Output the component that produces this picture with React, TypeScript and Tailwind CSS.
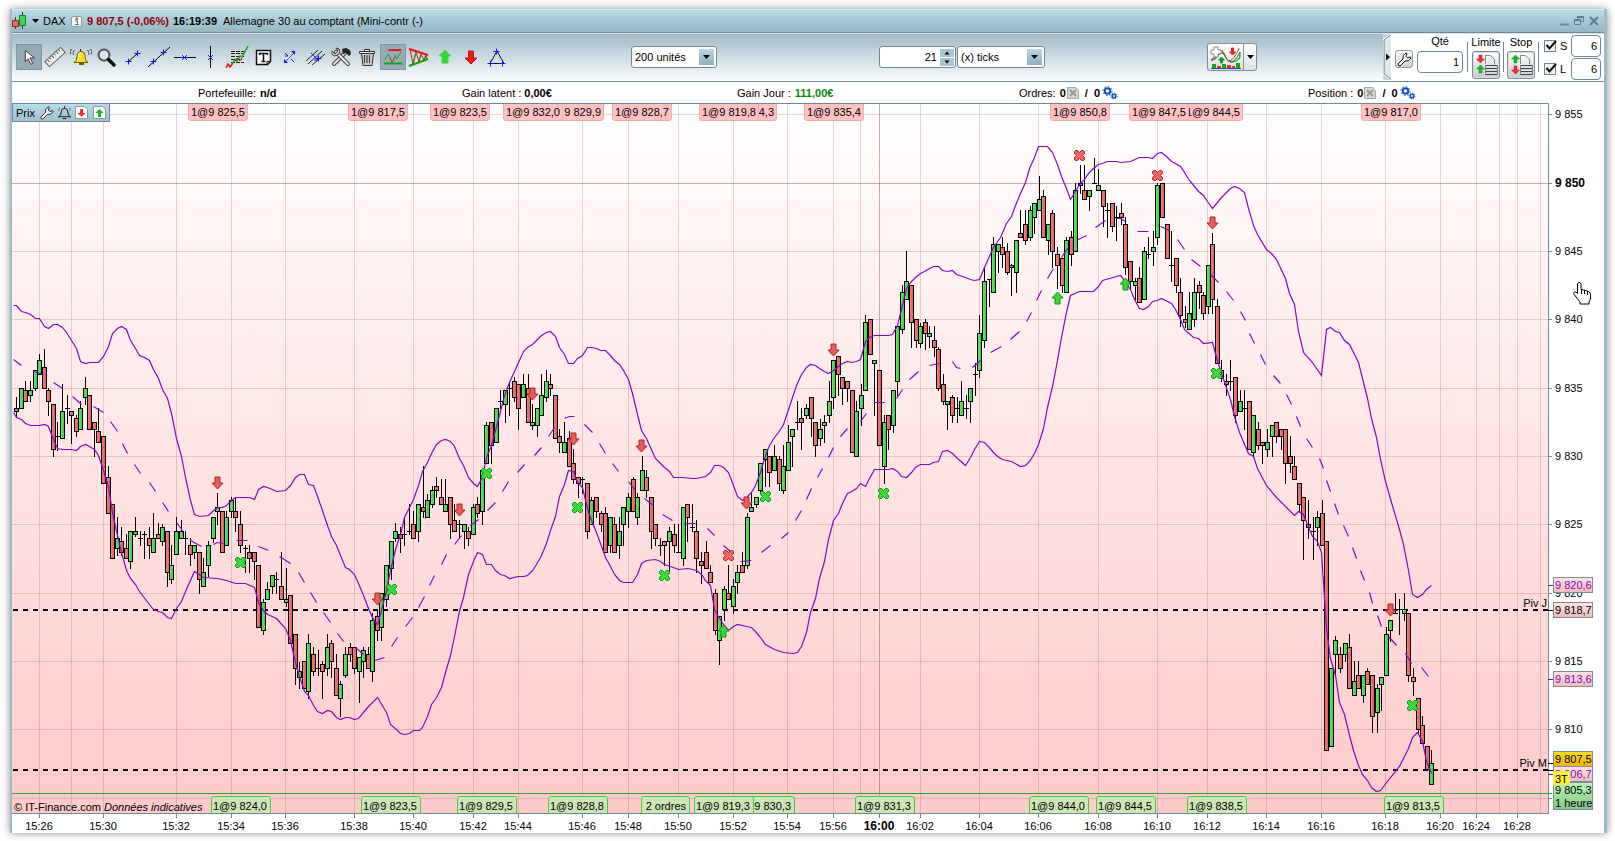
import { useState } from "react";
import type { ReactNode } from "react";

// high, body top, body bottom, low, rising (1) or falling (0), in chart units
const candles = [
  [397, 408, 411, 416, 0], [388, 388, 408, 408, 1], [381, 390, 401, 401, 0], [381, 390, 395, 401, 1], [370, 370, 388, 390, 1],
  [354, 360, 374, 374, 1], [349, 367, 388, 388, 0], [388, 390, 401, 415, 0], [404, 404, 449, 456, 0], [422, 436, 436, 450, 0],
  [384, 411, 438, 438, 1], [395, 408, 408, 423, 0], [411, 411, 415, 443, 0], [415, 418, 431, 436, 0], [401, 408, 429, 429, 1],
  [377, 388, 397, 404, 1], [395, 395, 429, 429, 0], [422, 422, 429, 456, 0], [408, 431, 442, 442, 0], [436, 436, 483, 483, 0],
  [466, 477, 513, 513, 0], [504, 504, 558, 558, 0], [517, 538, 548, 555, 1], [527, 541, 552, 555, 0], [534, 548, 558, 558, 0],
  [531, 531, 561, 568, 1], [517, 531, 534, 536, 1], [531, 538, 538, 545, 0], [531, 534, 534, 558, 0], [527, 538, 545, 558, 0],
  [513, 538, 552, 552, 1], [523, 534, 538, 538, 0], [524, 527, 541, 545, 1], [531, 531, 572, 586, 0], [545, 565, 579, 583, 1],
  [517, 531, 554, 554, 1], [520, 531, 538, 538, 1], [531, 538, 538, 554, 0], [538, 545, 554, 565, 0], [545, 545, 552, 558, 1],
  [552, 552, 579, 593, 0], [558, 572, 586, 586, 1], [541, 545, 565, 576, 1], [517, 517, 538, 542, 1], [493, 507, 511, 524, 1],
  [511, 511, 552, 552, 0], [511, 517, 545, 545, 1], [497, 500, 511, 517, 1], [497, 511, 517, 531, 0], [511, 524, 545, 552, 0],
  [545, 548, 548, 572, 0], [545, 552, 558, 572, 0], [552, 552, 561, 579, 0], [565, 565, 627, 627, 0], [599, 602, 630, 634, 1],
  [582, 589, 599, 599, 1], [575, 575, 586, 593, 1], [572, 579, 579, 593, 0], [552, 586, 599, 599, 0], [568, 599, 602, 606, 1],
  [595, 595, 643, 643, 0], [634, 634, 668, 684, 0], [662, 671, 677, 688, 1], [661, 661, 688, 688, 0], [634, 643, 691, 698, 1],
  [647, 654, 671, 675, 0], [650, 668, 668, 675, 0], [661, 664, 671, 698, 0], [634, 647, 668, 675, 1], [640, 643, 661, 677, 0],
  [654, 668, 695, 695, 0], [681, 684, 698, 716, 1], [647, 654, 675, 677, 1], [643, 647, 654, 661, 0], [647, 647, 668, 673, 0],
  [657, 657, 671, 702, 1], [647, 650, 661, 677, 1], [647, 654, 668, 668, 0], [613, 620, 671, 681, 1], [609, 616, 630, 640, 0],
  [593, 593, 627, 640, 1], [565, 565, 599, 606, 1], [541, 541, 568, 579, 1], [523, 531, 538, 541, 1], [527, 534, 538, 552, 0],
  [517, 534, 534, 545, 0], [504, 531, 531, 534, 0], [511, 524, 538, 538, 0], [504, 504, 531, 541, 1], [466, 507, 511, 517, 0],
  [494, 500, 517, 517, 1], [486, 490, 504, 507, 1], [477, 486, 490, 497, 0], [479, 497, 504, 504, 0], [479, 504, 511, 511, 1],
  [497, 497, 524, 538, 0], [504, 520, 531, 531, 0], [520, 524, 524, 538, 0], [524, 524, 531, 548, 1], [527, 531, 538, 545, 0],
  [504, 507, 534, 534, 1], [497, 504, 513, 517, 0], [470, 470, 511, 524, 1], [422, 425, 463, 463, 1], [422, 422, 445, 463, 0],
  [408, 408, 442, 442, 1], [390, 401, 401, 408, 0], [390, 390, 404, 422, 1], [382, 388, 388, 415, 0], [377, 381, 397, 401, 0],
  [384, 384, 408, 429, 0], [374, 384, 397, 397, 1], [374, 388, 422, 422, 0], [404, 422, 425, 429, 1], [408, 408, 425, 436, 1],
  [374, 395, 415, 415, 1], [370, 381, 397, 401, 1], [374, 384, 388, 395, 0], [395, 395, 438, 438, 0], [429, 436, 442, 452, 0],
  [422, 442, 452, 452, 1], [431, 438, 466, 466, 0], [449, 463, 479, 483, 0], [477, 477, 483, 497, 0], [477, 479, 479, 493, 0],
  [483, 483, 531, 538, 0], [497, 500, 524, 524, 1], [497, 497, 511, 517, 0], [511, 513, 524, 531, 0], [507, 513, 552, 552, 0],
  [517, 517, 545, 552, 1], [517, 524, 552, 552, 0], [517, 531, 545, 558, 1], [507, 507, 524, 545, 1], [493, 497, 511, 527, 1],
  [477, 479, 511, 511, 0], [493, 497, 517, 524, 1], [456, 470, 490, 490, 1], [470, 477, 490, 497, 0], [497, 497, 531, 548, 0],
  [524, 524, 538, 545, 0], [538, 545, 545, 555, 0], [541, 541, 545, 565, 0], [527, 531, 541, 571, 1], [524, 534, 545, 552, 0],
  [524, 552, 552, 552, 0], [507, 507, 558, 565, 1], [504, 504, 517, 541, 0], [504, 527, 527, 531, 0], [520, 531, 558, 572, 0],
  [552, 561, 565, 583, 0], [541, 552, 568, 568, 0], [565, 572, 582, 582, 0], [589, 593, 630, 634, 0], [616, 616, 640, 664, 1],
  [586, 589, 609, 620, 1], [565, 593, 599, 599, 0], [579, 586, 606, 613, 1], [565, 572, 582, 593, 1], [552, 565, 572, 572, 0],
  [513, 517, 565, 568, 1], [493, 507, 511, 511, 1], [497, 497, 504, 507, 1], [463, 463, 490, 493, 1], [449, 449, 459, 486, 1],
  [456, 456, 472, 486, 0], [445, 456, 470, 470, 1], [456, 459, 483, 490, 0], [445, 466, 490, 493, 1], [425, 442, 470, 470, 1],
  [429, 429, 436, 466, 1], [401, 422, 422, 429, 0], [408, 418, 422, 449, 0], [404, 408, 415, 418, 1], [397, 397, 418, 436, 0],
  [422, 422, 445, 456, 0], [419, 429, 438, 445, 1], [415, 422, 425, 442, 1], [381, 401, 415, 422, 1], [360, 360, 397, 408, 1],
  [356, 356, 374, 395, 0], [377, 377, 388, 404, 0], [381, 381, 388, 401, 0], [390, 390, 452, 452, 0], [401, 411, 456, 456, 1],
  [384, 395, 408, 425, 1], [315, 322, 390, 390, 1], [319, 319, 354, 354, 0], [360, 360, 363, 415, 1], [370, 370, 445, 445, 0],
  [415, 422, 466, 483, 1], [415, 415, 429, 449, 0], [390, 390, 425, 432, 1], [326, 326, 381, 395, 1], [285, 292, 329, 333, 1],
  [251, 281, 299, 299, 1], [285, 285, 322, 347, 0], [319, 319, 340, 347, 0], [323, 326, 343, 347, 1], [319, 322, 333, 349, 0],
  [326, 333, 336, 347, 1], [326, 340, 347, 356, 0], [347, 349, 388, 390, 0], [374, 384, 401, 404, 0], [401, 401, 404, 429, 1],
  [395, 397, 415, 422, 0], [397, 408, 408, 422, 0], [381, 401, 415, 415, 1], [395, 408, 408, 418, 0], [388, 388, 401, 422, 1],
  [363, 374, 374, 395, 0], [315, 333, 370, 377, 1], [267, 281, 340, 347, 1], [279, 279, 279, 306, 0], [237, 244, 292, 292, 1],
  [244, 244, 251, 272, 1], [237, 247, 254, 267, 0], [243, 251, 272, 274, 0], [264, 265, 267, 295, 1], [240, 240, 272, 292, 1],
  [210, 233, 237, 237, 0], [210, 224, 240, 244, 0], [206, 210, 237, 240, 1], [203, 203, 217, 233, 1], [176, 199, 210, 210, 1],
  [190, 196, 237, 237, 0], [224, 224, 240, 254, 1], [210, 213, 251, 267, 0], [247, 254, 265, 288, 0], [258, 258, 285, 292, 0],
  [237, 240, 292, 292, 1], [231, 237, 254, 265, 0], [183, 190, 251, 251, 1], [165, 183, 185, 193, 0], [165, 190, 199, 199, 0],
  [190, 190, 196, 210, 1], [158, 183, 183, 183, 0], [169, 185, 190, 190, 1], [190, 190, 206, 226, 0], [203, 210, 210, 237, 0],
  [203, 203, 226, 231, 0], [206, 217, 217, 240, 0], [203, 213, 217, 224, 0], [217, 224, 267, 274, 0], [261, 261, 281, 288, 0],
  [278, 281, 285, 299, 1], [267, 278, 302, 302, 0], [247, 251, 299, 299, 1], [237, 254, 254, 258, 0], [231, 247, 251, 265, 1],
  [183, 185, 237, 244, 1], [183, 183, 217, 217, 0], [224, 224, 258, 258, 0], [231, 265, 265, 281, 0], [258, 258, 285, 292, 0],
  [278, 292, 315, 326, 0], [306, 319, 322, 327, 0], [292, 313, 329, 329, 1], [278, 292, 319, 326, 1], [281, 285, 292, 308, 0],
  [292, 295, 313, 319, 0], [265, 265, 306, 313, 1], [233, 244, 299, 313, 0], [299, 306, 363, 363, 0], [360, 370, 378, 381, 0],
  [374, 381, 384, 395, 0], [360, 381, 381, 390, 0], [377, 377, 415, 422, 0], [390, 401, 411, 411, 1], [390, 408, 408, 429, 0],
  [401, 401, 449, 449, 0], [415, 415, 452, 456, 1], [422, 429, 445, 449, 0], [442, 442, 445, 463, 0], [429, 442, 449, 456, 1],
  [425, 425, 436, 456, 1], [422, 422, 436, 442, 0], [429, 429, 436, 449, 0], [429, 429, 463, 483, 0], [436, 456, 463, 472, 0],
  [456, 466, 479, 479, 0], [483, 483, 504, 511, 0], [497, 497, 520, 559, 0], [500, 524, 527, 538, 0], [517, 531, 531, 559, 0],
  [511, 517, 527, 545, 1], [500, 513, 545, 545, 0], [541, 541, 750, 750, 0], [668, 668, 746, 746, 1], [636, 640, 654, 675, 1],
  [647, 654, 668, 672, 0], [643, 643, 654, 661, 1], [634, 647, 688, 688, 0], [661, 681, 695, 695, 1], [661, 675, 688, 688, 0],
  [675, 675, 695, 702, 1], [668, 671, 684, 684, 0], [675, 675, 716, 732, 0], [684, 688, 712, 732, 1], [677, 677, 684, 710, 1],
  [627, 634, 675, 675, 1], [620, 620, 630, 641, 1], [593, 613, 613, 613, 0], [599, 609, 609, 634, 0], [593, 609, 613, 620, 1],
  [613, 613, 675, 681, 0], [668, 677, 681, 695, 0], [698, 698, 729, 732, 0], [716, 725, 743, 743, 0], [746, 746, 769, 769, 0],
  [750, 763, 784, 784, 1],
];

const upperBand =
  "13,305 16,305 21,311 25,312 30,314 35,318 39,318 44,326 48,328 53,324 57,324 62,327 66,332 71,340 76,348 80,361 85,363 89,362 98,362 103,356 108,346 112,333 117,328 121,326 126,329 130,340 135,348 139,355 144,357 149,360 153,369 158,378 162,389 167,398 171,413 176,438 181,456 185,477 190,500 194,514 199,516 208,515 212,511 217,507 222,507 226,505 231,500 235,497 249,497 254,499 258,489 263,486 267,487 272,489 276,491 285,490 290,485 295,477 299,474 304,474 308,484 313,485 317,496 322,510 327,525 331,536 336,545 340,555 345,567 349,569 354,574 358,583 363,595 368,608 372,617 377,624 381,610 386,590 390,570 395,549 400,534 404,517 409,507 413,499 418,485 422,471 427,462 431,453 436,444 441,440 445,439 450,441 454,446 459,458 463,465 468,477 473,483 477,486 482,477 486,457 491,445 495,430 500,411 504,395 509,382 514,371 518,362 523,351 527,347 532,344 536,340 541,335 546,332 550,331 555,336 559,347 564,354 568,363 573,363 577,358 582,355 587,347 591,347 596,348 600,350 605,350 609,354 614,360 619,364 623,370 628,379 632,393 637,414 641,430 646,438 650,447 655,458 660,463 664,467 669,471 673,477 682,477 692,478 696,478 705,476 710,472 714,465 719,465 723,467 728,472 733,485 737,496 742,500 746,497 751,492 755,485 760,472 765,455 769,445 774,437 778,432 783,424 787,412 792,397 796,385 801,374 806,367 810,364 815,365 819,368 824,371 828,373 833,370 838,366 842,363 847,361 851,362 856,361 860,359 865,341 869,337 874,335 888,335 892,334 897,325 901,309 906,288 911,281 915,277 920,273 924,271 929,268 933,266 938,266 942,270 947,271 952,270 956,274 965,277 970,279 974,280 979,279 984,267 988,258 993,247 1000,237 1006,223 1011,216 1015,205 1020,193 1025,182 1029,168 1034,157 1038,146 1047,146 1052,152 1057,164 1061,176 1066,188 1070,199 1075,191 1079,184 1084,179 1088,173 1093,168 1098,164 1102,163 1107,161 1116,161 1120,162 1130,161 1139,157 1148,157 1152,158 1157,153 1161,152 1166,156 1171,161 1175,163 1180,166 1184,172 1189,180 1198,191 1203,195 1207,201 1212,208 1221,197 1230,188 1234,186 1239,188 1244,192 1248,208 1253,225 1257,234 1266,249 1271,253 1276,259 1285,278 1289,293 1294,304 1298,331 1303,352 1312,362 1321,375 1326,329 1330,327 1335,331 1339,332 1344,340 1349,344 1358,362 1367,398 1371,418 1376,437 1380,459 1385,481 1391,502 1399,529 1403,544 1408,570 1412,594 1417,597 1422,594 1426,589 1431,585";

const lowerBand =
  "13,412 16,417 21,419 25,423 30,425 39,425 44,424 48,426 53,439 57,448 62,449 71,449 76,450 80,446 85,444 89,446 94,449 98,455 103,470 108,486 112,512 117,535 121,552 126,570 130,578 135,584 139,591 149,604 153,609 158,611 162,612 167,617 171,618 176,608 181,601 185,591 194,571 203,577 217,578 226,580 235,583 245,583 254,587 258,602 263,610 267,614 276,618 285,628 290,640 295,662 299,676 304,691 308,695 313,705 317,711 322,713 327,710 331,711 336,717 340,719 345,717 349,717 354,719 358,718 368,706 377,697 386,712 390,724 397,730 400,733 404,734 409,733 413,730 419,730 422,727 427,716 431,704 436,697 441,687 445,672 450,655 454,636 459,611 463,597 468,574 473,561 477,552 482,554 486,564 491,564 495,570 500,574 504,575 509,578 518,576 523,576 527,575 532,570 536,564 541,555 546,543 550,530 555,516 559,496 564,484 568,470 573,471 577,482 582,487 587,508 591,520 596,532 600,543 605,557 609,564 614,574 619,580 623,582 632,582 637,574 641,563 646,560 655,559 660,561 664,564 673,567 678,569 687,568 692,569 696,570 701,574 705,580 710,585 714,609 719,618 723,624 728,630 733,626 737,624 746,626 751,627 755,631 760,637 765,644 774,649 783,652 792,653 797,652 801,646 806,632 810,612 815,598 819,578 824,561 828,539 833,520 838,513 842,503 847,493 851,491 856,488 860,483 865,486 869,478 874,469 888,469 892,468 897,471 901,476 906,477 911,472 915,467 920,464 929,464 933,462 938,461 942,451 947,450 952,453 956,457 965,465 970,457 974,449 979,441 984,442 988,446 993,452 997,456 1002,459 1011,461 1020,466 1025,465 1029,461 1034,453 1038,444 1043,428 1047,407 1052,386 1057,360 1061,337 1066,312 1070,295 1079,291 1093,291 1098,286 1102,280 1116,276 1120,275 1125,281 1130,289 1134,299 1139,308 1143,309 1148,306 1152,301 1157,300 1161,298 1171,303 1175,309 1180,319 1184,329 1193,337 1198,338 1203,343 1212,342 1216,357 1221,373 1230,399 1234,416 1239,432 1248,453 1253,456 1257,468 1266,485 1276,497 1289,510 1294,515 1298,511 1303,514 1307,524 1312,536 1317,541 1321,552 1326,628 1330,658 1335,675 1339,702 1344,714 1349,735 1353,750 1358,765 1362,774 1367,780 1371,787 1376,791 1380,790 1390,777 1399,766 1403,758 1408,748 1412,737 1417,732 1422,741 1426,761 1431,773";

// dashed moving average
const averagePath =
  "M13 359L21 365M33 371L43 374M53 382L62 388M72 396L81 404M93 406L103 412M110 421L117 431M122 443L127 453M134 464L140 473M149 482L155 491M162 502L168 511M176 522L182 530M190 540L201 546M213 544L217 542L223 543M236 540H247M258 546L268 550M279 556L290 563M298 572L304 582M310 592L316 602M323 612L330 622M337 633L343 641M355 647L363 654M374 660L384 657M391 646L397 637M405 626L412 617M418 607L424 596M429 585L434 575M441 564L446 554M454 544L461 535M470 525L478 519M487 510L495 502M502 491L508 481M517 472L524 464M534 455L541 447M548 436L554 427M564 418L569 416H574M584 424L592 432M599 443L605 453M612 463L618 471M628 481L635 490M644 498L653 505M662 514L672 520M684 523H695M707 528L714 535M723 545L731 552M740 561L751 560M761 552L770 545M781 538L788 532M795 520L801 510M806 499L811 488M817 477L822 468M828 457L833 447M840 436L847 428M860 421L866 413M874 402H884M896 398L902 389M909 379L918 371M929 365L939 363M952 361L956 367L960 368M972 367L980 360M990 352L1001 346M1010 339L1019 331M1026 321L1031 312M1036 300L1041 290M1047 278L1053 268M1061 257L1067 248M1076 240L1086 235M1095 227L1105 220M1116 218L1120 218L1125 221M1137 231H1148M1160 226L1169 230M1177 239L1184 249M1191 259L1200 266M1210 274L1218 282M1226 291L1233 300M1240 311L1245 320M1249 333L1254 343M1260 354L1265 364M1273 375L1280 383M1286 394L1291 404M1296 416L1300 426M1306 438L1312 447M1319 458L1323 468M1326 480L1330 491M1334 503L1338 514M1343 525L1348 536M1352 547L1356 558M1360 570L1364 580M1369 592L1372 603M1377 615L1381 626M1388 636L1396 645M1405 653L1411 663M1421 667L1428 676";

const prices = [
  { y: 114, label: "9 855" },
  { y: 183, label: "9 850", major: true },
  { y: 251, label: "9 845" },
  { y: 319, label: "9 840" },
  { y: 388, label: "9 835" },
  { y: 456, label: "9 830" },
  { y: 524, label: "9 825" },
  { y: 593, label: "9 820" },
  { y: 661, label: "9 815" },
  { y: 729, label: "9 810" },
  { y: 798, label: "" },
];

const times = [
  { x: 39, label: "15:26" }, { x: 71, label: "" }, { x: 103, label: "15:30" }, { x: 176, label: "15:32" },
  { x: 231, label: "15:34" }, { x: 285, label: "15:36" }, { x: 354, label: "15:38" }, { x: 413, label: "15:40" },
  { x: 473, label: "15:42" }, { x: 518, label: "15:44" }, { x: 582, label: "15:46" }, { x: 628, label: "15:48" },
  { x: 678, label: "15:50" }, { x: 733, label: "15:52" }, { x: 787, label: "15:54" }, { x: 833, label: "15:56" },
  { x: 860, label: "" }, { x: 879, label: "16:00", major: true }, { x: 920, label: "16:02" }, { x: 979, label: "16:04" },
  { x: 1038, label: "16:06" }, { x: 1098, label: "16:08" }, { x: 1157, label: "16:10" }, { x: 1207, label: "16:12" },
  { x: 1266, label: "16:14" }, { x: 1321, label: "16:16" }, { x: 1385, label: "16:18" }, { x: 1440, label: "16:20" },
  { x: 1476, label: "16:24" }, { x: 1499, label: "" }, { x: 1517, label: "16:28" }, { x: 1540, label: "" },
];

// an order that is partly covered by its neighbour comes first and shows only the end of its text
const sells = [
  { x: 188, text: "1@9 825,5" }, { x: 348, text: "1@9 817,5" }, { x: 430, text: "1@9 823,5" },
  { x: 544, text: "9 829,9" }, { x: 503, text: "1@9 832,0" }, { x: 612, text: "1@9 828,7" },
  { x: 717, text: "4,3" }, { x: 699, text: "1@9 819,8" }, { x: 804, text: "1@9 835,4" },
  { x: 1050, text: "1@9 850,8" }, { x: 1183, text: "1@9 844,5" }, { x: 1129, text: "1@9 847,5" },
  { x: 1361, text: "1@9 817,0" },
];
const buys = [
  { x: 211, text: "1@9 824,0" }, { x: 361, text: "1@9 823,5" }, { x: 457, text: "1@9 829,5" },
  { x: 548, text: "1@9 828,8" }, { x: 641, text: "2 ordres", w: 48 }, { x: 735, text: "9 830,3" },
  { x: 694, text: "1@9 819,3" }, { x: 855, text: "1@9 831,3" }, { x: 1029, text: "1@9 844,0" },
  { x: 1096, text: "1@9 844,5" }, { x: 1187, text: "1@9 838,5" }, { x: 1384, text: "1@9 813,5" },
];

const downArrows = [[217, 477], [377, 593], [459, 504], [532, 388], [573, 433], [641, 440], [746, 497], [833, 344], [1212, 217], [1390, 604]];
const upArrows = [[723, 625], [1057, 292], [1125, 278]];
const redCrosses = [[728, 555], [1079, 155], [1157, 175]];
const greenCrosses = [[240, 562], [391, 589], [486, 473], [577, 507], [664, 575], [765, 496], [883, 493], [1216, 373], [1412, 705]];

const downPath = "M-2 0H3V6H6L.5 12L-5 6H-2Z";
const upPath = "M-2 12H3V6H6L.5 0L-5 6H-2Z";
const crossPath = "M-4-5H-2L0-3L2-5H4L5-4V-2L3 0L5 2V4L4 5H2L0 3L-2 5H-4L-5 4V2L-3 0L-5-2V-4Z";

const PriceTag = ({ y, h, text, fill, color }: { y: number; h: number; text: string; fill: string; color: string }) => (
  <g>
    <rect x="1553.5" y={y + 0.5} width="39" height={h} fill={fill} stroke="#7a8f9a" />
    <text x="1555" y={y + 12} fill={color}>{text}</text>
  </g>
);

const Chart = () => (
  <svg viewBox="12 103 1592 730" className="block h-auto w-full text-[11px]">
    <defs>
      <linearGradient id="plot" x2="0" y2="1">
        <stop stopColor="#ffffff" />
        <stop offset="1" stopColor="#ffcaca" />
      </linearGradient>
      <linearGradient id="rise">
        <stop stopColor="#6cec6c" />
        <stop offset="1" stopColor="#3cc43c" />
      </linearGradient>
      <linearGradient id="fall">
        <stop stopColor="#f58484" />
        <stop offset="1" stopColor="#d85858" />
      </linearGradient>
      <linearGradient id="tag" x2="0" y2="1">
        <stop stopColor="#fde4e4" />
        <stop offset="1" stopColor="#f0bcbc" />
      </linearGradient>
      <linearGradient id="gold" x2="0" y2="1">
        <stop stopColor="#ffdc20" />
        <stop offset="1" stopColor="#f0b400" />
      </linearGradient>
      <linearGradient id="hour" x2="0" y2="1">
        <stop stopColor="#baf6ba" />
        <stop offset="1" stopColor="#88c888" />
      </linearGradient>
    </defs>

    <rect x="12" y="103" width="1537" height="711" fill="url(#plot)" />
    <g shapeRendering="crispEdges">
      {prices.map((p) => (
        <g key={p.y}>
          <path d={`M12 ${p.y + 0.5}H1548`} stroke="#8c3c3c" strokeOpacity={p.major ? 0.42 : 0.2} />
          <path d={`M1548 ${p.y + 0.5}h4`} stroke="#6e8894" />
        </g>
      ))}
      {times.map((t) => (
        <g key={t.x}>
          <path d={`M${t.x + 0.5} 104V813`} stroke="#8c3c3c" strokeOpacity={t.major ? 0.42 : 0.2} />
          {t.label && <path d={`M${t.x + 0.5} 813v5`} stroke="#6e8894" />}
        </g>
      ))}
      <path d="M13 610H1548M13 770H1548" stroke="#000" strokeWidth="2" strokeDasharray="5 5" />
      <path d="M12 793.5H1552" stroke="#2fa62f" />
      {candles.map(([high, top, bottom, low, rising], i) => {
        const x = Math.floor(16.8 + i * 4.5645);
        return (
          <g key={i} stroke="#000">
            <path d={`M${x + 0.5} ${high}V${low + 1}`} />
            {top === bottom ? (
              <path d={`M${x - 2} ${top + 0.5}h5`} />
            ) : (
              <rect x={x - 1.5} y={top + 0.5} width="4" height={bottom - top} fill={rising ? "url(#rise)" : "url(#fall)"} />
            )}
          </g>
        );
      })}
    </g>

    <g fill="none" stroke="#8408c4" strokeWidth="1.2">
      <polyline points={upperBand} transform="translate(.5 .5)" />
      <polyline points={lowerBand} transform="translate(.5 .5)" />
      <path d={averagePath} transform="translate(.5 .5)" />
    </g>

    {downArrows.map(([x, y]) => (
      <path key={x} d={downPath} transform={`translate(${x} ${y})`} fill="#e85c5c" stroke="#a82424" />
    ))}
    {upArrows.map(([x, y]) => (
      <path key={x} d={upPath} transform={`translate(${x} ${y})`} fill="#38d838" stroke="#149014" />
    ))}
    {redCrosses.map(([x, y]) => (
      <path key={x} d={crossPath} transform={`translate(${x + 0.5} ${y + 0.5})`} fill="#f06464" stroke="#a82828" />
    ))}
    {greenCrosses.map(([x, y]) => (
      <path key={x} d={crossPath} transform={`translate(${x + 0.5} ${y + 0.5})`} fill="#38dc38" stroke="#108c14" />
    ))}

    {sells.map((o) => (
      <g key={o.x}>
        <path d={`M${o.x + 0.5} 104v14q0 2.500 2.500 2.500h54q2.500 0 2.500-2.500V104`} fill="#ffc2c2" stroke="#ffa8a8" />
        <text x={o.x + 57} y="116" textAnchor="end">{o.text}</text>
      </g>
    ))}
    {buys.map((o) => {
      const w = o.w ?? 59;
      return (
        <g key={o.x}>
          <path d={`M${o.x + 0.5} 813V799q0-2.500 2.500-2.500h${w - 5}q2.500 0 2.500 2.500V813`} fill="#cde6b8" stroke="#44cc44" />
          <text x={o.x + w - 3} y="810" textAnchor="end">{o.text}</text>
        </g>
      );
    })}

    <text x="14" y="811">© IT-Finance.com</text>
    <text x="104" y="811" fontStyle="italic">Données indicatives</text>
    <text x="1547" y="607" textAnchor="end">Piv J</text>
    <text x="1547" y="767" textAnchor="end">Piv M</text>

    <path d="M12 103.500H1548.500V813.500H12" fill="none" stroke="#6e8894" />
    {prices.map((p) => (
      <text key={p.y} x="1555" y={p.y + 4} className={p.major ? "text-[12px] font-bold" : ""}>{p.label}</text>
    ))}
    {times.map((t) => (
      <text key={t.x} x={t.x} y="830" textAnchor="middle" className={t.major ? "text-[12px] font-bold" : ""}>{t.label}</text>
    ))}

    <path d="M1548 585.500h5M1548 679.500h5M1548 774.500h5" stroke="#8408c4" />
    <path d="M1548 610.500h5M1548 763.500h5M1548 770.500h5" stroke="#000" />
    <PriceTag y={577} h={15} text="9 820,6" fill="url(#tag)" color="#8408c4" />
    <PriceTag y={602} h={15} text="9 818,7" fill="url(#tag)" color="#000" />
    <PriceTag y={671} h={15} text="9 813,6" fill="url(#tag)" color="#8408c4" />
    <PriceTag y={766} h={15} text="9 806,7" fill="url(#tag)" color="#8408c4" />
    <PriceTag y={751} h={15} text="9 807,5" fill="url(#gold)" color="#000" />
    <PriceTag y={782} h={27} text="9 805,3" fill="url(#hour)" color="#000" />
    <text x="1555" y="807">1 heure</text>
    <rect x="1553" y="771" width="17" height="14" fill="#fcee38" />
    <text x="1555" y="783">3T</text>

    {/* hand pointer */}
    <path
      d="M1577.500 284l1-1.500h1.500l1 1.500v5.500l3 .5 3 1 2.500 1 1 2v5l-1.500 3v2h-9v-2l-4-5-2.500-3.500 1-1.500h1.500l1.500 1.500z"
      fill="#fff"
      stroke="#000"
      strokeLinejoin="round"
    />
    <path d="M1581.500 289v5M1584.500 290v4M1587.500 291v4" stroke="#000" />
  </svg>
);

const cursorIcon = <path d="M9 6v12l3-3 3 6 2-1-3-6h5z" fill="#fff" stroke="#333" strokeLinejoin="round" />;
const tick = "M0-3V3M-3 0H3";

const tools: { name: string; icon: ReactNode }[] = [
  { name: "Curseur", icon: cursorIcon },
  {
    name: "Règle",
    icon: (
      <g transform="rotate(-42 13 13)" fill="#eee" stroke="#555">
        <rect x="2.500" y="9.500" width="21" height="7" />
        <path d="M5.500 10v3M8.500 10v2M11.500 10v3M14.500 10v2M17.500 10v3M20.500 10v2" />
      </g>
    ),
  },
  {
    name: "Alarme",
    icon: (
      <>
        <path d="M6 18.500q3-1.500 3-6q0-5 4-5t4 5q0 4.500 3 6z" fill="#f8e020" stroke="#6b5a00" />
        <path d="M10 16q1-2 1-5t2-2" fill="none" stroke="#fffbb0" />
        <path d="M11 19h5v2h-5z" fill="#6b5a00" />
        <path d="M12.500 5v2M6.500 6q-2 2-1 5M3.500 5q-2 3-.5 6M19.500 6q2 2 1 5M22.500 5q2 3 .5 6" fill="none" stroke="#222" strokeDasharray="2 1" />
      </>
    ),
  },
  {
    name: "Loupe",
    icon: (
      <>
        <circle cx="10" cy="11" r="5.500" fill="#dfe9ee" stroke="#555" strokeWidth="2" />
        <path d="M14.500 15.500L20 21" stroke="#111" strokeWidth="3.500" strokeLinecap="round" />
      </>
    ),
  },
  {
    name: "Segment",
    icon: (
      <>
        <path d="M8 18L18 9" stroke="#000" />
        <path d={tick} transform="translate(8.500 17.500)" stroke="#1414ff" />
        <path d={tick} transform="translate(17.500 9.500)" stroke="#1414ff" />
      </>
    ),
  },
  {
    name: "Droite",
    icon: (
      <>
        <path d="M2 23L24 3" stroke="#000" />
        <path d={tick} transform="translate(7.500 17.500)" stroke="#1414ff" />
        <path d={tick} transform="translate(17.500 8.500)" stroke="#1414ff" />
      </>
    ),
  },
  {
    name: "Ligne horizontale",
    icon: (
      <>
        <path d="M2 13.500H24" stroke="#000" />
        <path d="M10 11l5 5M15 11l-5 5M9 13.500h7" stroke="#1414ff" />
      </>
    ),
  },
  {
    name: "Ligne verticale",
    icon: (
      <>
        <path d="M12.500 2V24" stroke="#000" />
        <path d="M10 11l5 5M15 11l-5 5" stroke="#1414ff" />
      </>
    ),
  },
  {
    name: "Retracements",
    icon: (
      <>
        <path d="M7 7.500H21M7 9.500H20M7 12.500H20M7 15.500H18M7 18.500H20" stroke="#222" strokeDasharray="4 1" />
        <path d="M2 24l2-4 2 3 3-4" fill="none" stroke="#f01010" strokeWidth="1.500" />
        <path d="M8 20l3-4 2 1 3-5 2 1L24 2" fill="none" stroke="#10b010" strokeWidth="1.500" />
        <path d="M11 17l2-3 3 3 2-3" fill="none" stroke="#f01010" />
      </>
    ),
  },
  {
    name: "Texte",
    icon: (
      <>
        <path d="M6.500 6.500h14v11l-3 3h-11z" fill="#fff" stroke="#111" strokeWidth="1.500" />
        <path d="M20 17.500h-3v3" fill="none" stroke="#111" />
        <path d="M9.500 11V9.500h8V11M13.500 9.500v8M11.500 17.500h4" fill="none" stroke="#111" strokeWidth="1.500" />
      </>
    ),
  },
  {
    name: "Flèche",
    icon: (
      <>
        <path d="M9 18L18 9" stroke="#222" strokeDasharray="2 1" />
        <path d="M15 7h4v4zM8 15v4h4z" fill="#1414ff" />
        <path d="M9 9l3 3M15 15l3 3M9 12h3" stroke="#1414ff" />
      </>
    ),
  },
  {
    name: "Canal",
    icon: (
      <>
        <path d="M4 17L16 6M6 20L20 7M10 21L23 10" stroke="#223" />
        <path d="M9 9l7 7M16 12v4h-4" fill="none" stroke="#1414ff" />
        <path d={tick} transform="translate(16.500 14.500)" stroke="#1414ff" />
      </>
    ),
  },
  {
    name: "Outils",
    icon: (
      <>
        <path d="M6 20L18 8" stroke="#444" strokeWidth="4" strokeLinecap="round" />
        <path d="M6 20L18 8" stroke="#ddd" strokeWidth="2" strokeLinecap="round" />
        <path d="M14 5l4-1 4 2 1 4-2 2-3-3-3 1z" fill="#222" />
        <path d="M8 8L20 20" stroke="#444" strokeWidth="4" strokeLinecap="round" />
        <path d="M8 8L20 20" stroke="#eee" strokeWidth="2" strokeLinecap="round" />
        <path d="M4 7l3 3 3-3-2-3q4 0 4 4l-2 3-4 1q-3-1-2-5z" fill="#ccc" stroke="#444" />
      </>
    ),
  },
  {
    name: "Supprimer",
    icon: (
      <>
        <path d="M7.500 9.500h12l-1.500 12h-9z" fill="#ccc" stroke="#333" />
        <path d="M5.500 7.500h15v2h-15zM10.500 7V5.500h5V7" fill="#eee" stroke="#333" />
        <path d="M10.500 11v8M13 11v8M15.500 11v8" stroke="#444" strokeWidth="1.200" />
      </>
    ),
  },
  {
    name: "Supports",
    icon: (
      <>
        <path d="M8 5.500h14" stroke="#f01010" strokeWidth="2" />
        <path d="M3 20h20" stroke="#10a010" strokeWidth="2" />
        <path d="M4 16l4-6 2 4" fill="none" stroke="#10a010" />
        <path d="M10 14l2 5 4-8" fill="none" stroke="#d02020" />
        <path d="M15 11l2 4 5-8" fill="none" stroke="#10a010" />
      </>
    ),
  },
  {
    name: "Triangles",
    icon: (
      <>
        <path d="M3 5L22 11" stroke="#f01010" strokeWidth="2" />
        <path d="M3 22L22 15" stroke="#10a010" strokeWidth="2" />
        <path d="M4 5l3 15L10 8l3 10 2-8 3 6 2-5 1 4" fill="none" stroke="#d02020" />
        <path d="M7 20l3-12M13 18l2-8M18 16l2-5" stroke="#10a010" />
      </>
    ),
  },
  { name: "Achat", icon: <path d="M13 6l6 6h-3v7h-6v-7H7z" fill="#28e028" stroke="#58c858" /> },
  { name: "Vente", icon: <path d="M13 20l-6-6h3.500V7h5v7H19z" fill="#f01818" stroke="#c01010" /> },
  {
    name: "Triangle",
    icon: (
      <>
        <path d="M13 7L6 19.500H20Z" fill="none" stroke="#111" />
        <path d={tick} transform="translate(12.500 7.500)" stroke="#1414ff" />
        <path d={tick} transform="translate(6.500 19.500)" stroke="#1414ff" />
        <path d={tick} transform="translate(18.500 19.500)" stroke="#1414ff" />
      </>
    ),
  },
];

const Caret = () => (
  <svg viewBox="0 0 15 16" className="pointer-events-none absolute top-[3px] right-[3px] h-4 w-[15px] bg-linear-to-b from-[#bcd9e4] to-[#8fb0be]">
    <path d="M4 6h7l-3.500 4z" />
  </svg>
);

const Select = ({ label, options, className }: { label: string; options: string[]; className: string }) => (
  <div className={`relative h-[22px] ${className}`}>
    <select aria-label={label} className="h-full w-full appearance-none rounded-[3px] border border-[#6e8894] bg-white pl-[3px]">
      {options.map((o) => (
        <option key={o}>{o}</option>
      ))}
    </select>
    <Caret />
  </div>
);

const Wrench = () => (
  <path d="M2 13l5-5q-1-4 3-6l1 .5-1 3 1.500 1.500 3-1 .5 1q-2 4-6 3l-5 5q-2 0-2-2z" fill="#fff" stroke="#111" />
);

const Gears = () => (
  <svg viewBox="0 0 16 14" className="ml-[2px] h-[14px] w-4">
    <circle cx="5.500" cy="5" r="2.800" fill="none" stroke="#1450b8" strokeWidth="2" />
    <circle cx="5.500" cy="5" r="4.500" fill="none" stroke="#1450b8" strokeDasharray="1.500 2" />
    <circle cx="12" cy="10" r="1.800" fill="none" stroke="#1450b8" strokeWidth="1.500" />
    <circle cx="12" cy="10" r="3" fill="none" stroke="#1450b8" strokeDasharray="1.200 1.100" />
  </svg>
);

const CancelIcon = () => (
  <svg viewBox="0 0 12 12" className="ml-px h-3 w-3">
    <path d="M.5.500h8l3 3v8H.5z" fill="#d8d8d8" stroke="#a8a8a8" />
    <path d="M3 3l6 6M9 3l-6 6" stroke="#9a9a9a" strokeWidth="2" />
  </svg>
);

const OrderButton = ({ label, stop }: { label: string; stop?: boolean }) => (
  <div className="flex w-[28px] flex-col items-center">
    <span className="h-[15px] leading-[13px] whitespace-nowrap">{label}</span>
    <button aria-label={label} className="h-[28px] w-[28px] rounded-[3px] border border-[#808890] bg-linear-to-b from-white to-[#c4cccf] shadow-[inset_0_0_0_1px_#d8dcde]">
      <svg viewBox="0 0 26 26" className="h-full w-full">
        <path d="M12.500 3.500h5l4 4v5M12.500 3v9" fill="none" stroke="#888" />
        <path d="M12.500 13.500h12M12.500 16.500h12M12.500 19.500h12M12.500 22.500h12" stroke="#444" />
        <path d="M12.500 13v10M24.500 13v10" stroke="#777" />
        {stop ? (
          <>
            <path d="M7.500 3l4 4h-2.500v4h-3V7H3.500z" fill="#18b818" stroke="#0c8c0c" strokeWidth=".5" />
            <path d="M7.500 22l4-4h-2.500v-4h-3v4H3.500z" fill="#f03030" stroke="#b01010" strokeWidth=".5" />
          </>
        ) : (
          <>
            <path d="M7.500 11l4-4h-2.500V3h-3v4H3.500z" fill="#f03030" stroke="#b01010" strokeWidth=".5" />
            <path d="M7.500 13l4 4h-2.500v4h-3v-4H3.500z" fill="#18b818" stroke="#0c8c0c" strokeWidth=".5" />
          </>
        )}
      </svg>
    </button>
  </div>
);

const Leg = ({ label }: { label: string }) => {
  const [on, setOn] = useState(true);
  return (
    <div className="flex h-[22px] items-center">
      <label className="flex w-[27px] items-center gap-1">
        <span className="relative h-3 w-3">
          <input
            type="checkbox"
            checked={on}
            onChange={() => setOn(!on)}
            className="block h-3 w-3 appearance-none border border-[#6e8894] bg-[#eef1f2]"
          />
          {on && (
            <svg viewBox="0 0 14 12" className="pointer-events-none absolute -top-px left-0 h-3 w-[14px]">
              <path d="M2.500 6l3 3.500L12 2" fill="none" stroke="#111" strokeWidth="2" />
            </svg>
          )}
        </span>
        {label}
      </label>
      <input aria-label={`Distance ${label}`} defaultValue="6" className="h-[22px] w-[30px] rounded-[4px] border border-[#6e8894] bg-white pr-[3px] text-right" />
    </div>
  );
};

const OrderPanel = () => (
  <div className="ml-auto flex h-full items-center bg-white">
    <div className="flex h-full w-3 items-center">
      <svg viewBox="0 0 12 47" className="h-full w-3">
        <path d="M0 0H8L0 5V42L8 47H0Z" fill="#c4d6dd" />
        <path d="M8 1L1 6V41L8 46" fill="#dfe9ed" stroke="#6e8894" />
        <path d="M3 20v7l4-3.500z" />
      </svg>
    </div>
    <button aria-label="Réglages" className="mt-1 h-[18px] w-[18px] rounded-[3px] border border-[#909898] bg-linear-to-b from-white to-[#ccd2d4]">
      <svg viewBox="0 0 16 16" className="h-full w-full">
        <Wrench />
      </svg>
    </button>
    <label className="ml-1 flex w-[46px] flex-col items-center">
      <span className="h-4 leading-[13px]">Qté</span>
      <input defaultValue="1" className="mb-[7px] h-[22px] w-full rounded-[4px] border border-[#6e8894] bg-white pr-[3px] text-right" />
    </label>
    <div className="mx-[4px] h-[30px] border-l border-[#6e8894]" />
    <OrderButton label="Limite" />
    <div className="mx-[3px] h-[30px] border-l border-[#6e8894]" />
    <OrderButton label="Stop" stop />
    <div className="mr-[5px] ml-[3px] h-[30px] border-l border-[#6e8894]" />
    <div className="mr-[3px] flex flex-col gap-px">
      <Leg label="S" />
      <Leg label="L" />
    </div>
  </div>
);

const TitleBar = () => (
  <header className="flex h-6 items-center border-t border-b border-t-[#d0edf5] border-b-[#6e8894] bg-linear-to-b from-[#b9dae7] to-[#98b5c2]">
    <svg viewBox="0 0 15 18" className="h-[18px] w-[15px]">
      <path d="M3.500 5v12M10.500 0v17" stroke="#333" />
      <path d="M.5 8.500h6v6h-6z" fill="#e86868" stroke="#a02020" />
      <path d="M7.500 3.500h6v10h-6z" fill="#38d858" stroke="#108020" />
    </svg>
    <button aria-label="Instrument" className="mr-1 ml-[5px]">
      <svg viewBox="0 0 7 4" className="h-1 w-[7px]">
        <path d="M0 0h7L3.500 4z" />
      </svg>
    </button>
    <span className="w-7">DAX</span>
    <button aria-label="Informations" className="h-[11px] w-[11px] rounded-[2px] border border-[#8a9ca5] bg-[#f2f6f7]">
      <svg viewBox="0 0 9 9" className="h-full w-full">
        <path d="M4 1h1.500v1.500H4zM3 4h2.500v3M3 7.500h4" fill="none" stroke="#667" />
      </svg>
    </button>
    <b className="ml-[5px] w-[86px] whitespace-nowrap text-[#90000c]">9 807,5 (-0,06%)</b>
    <b className="w-[50px]">16:19:39</b>
    <h1>Allemagne 30 au comptant (Mini-contr (-)</h1>
    <div className="mr-[5px] ml-auto flex gap-[5px]">
      <button aria-label="Réduire">
        <svg viewBox="0 0 10 10" className="h-[10px] w-[10px]"><path d="M1 8.500h9" stroke="#6a8694" strokeWidth="2" /></svg>
      </button>
      <button aria-label="Restaurer">
        <svg viewBox="0 0 10 10" className="h-[10px] w-[10px]"><path d="M3.500 3V.500h6v5H7M.5 3.500h6v5h-6zM.5 4.500h6M3.500 1.500h6" fill="none" stroke="#5f7d8c" /></svg>
      </button>
      <button aria-label="Fermer">
        <svg viewBox="0 0 10 10" className="h-[10px] w-[10px]"><path d="M1 1l8 8M9 1l-8 8" stroke="#5f7d8c" strokeWidth="2" /></svg>
      </button>
    </div>
  </header>
);

const Toolbar = () => {
  const [active, setActive] = useState(["Curseur", "Supports"]);
  const toggle = (name: string) =>
    setActive(active.includes(name) ? active.filter((n) => n !== name) : [...active, name]);

  return (
    <div className="flex h-[49px] items-center border-t border-b border-t-[#d6e6ec] border-b-[#6e8894] bg-linear-to-b from-[#a0bbc8] to-[#fcfdfd] pb-px pl-1">
      {tools.map((t) => (
        <button
          key={t.name}
          aria-label={t.name}
          onClick={() => toggle(t.name)}
          className={active.includes(t.name) ? "h-[26px] w-[26px] border border-[#7f97a3] bg-[#95abb7]" : "h-[26px] w-[26px]"}
        >
          <svg viewBox="0 0 26 26" className="h-full w-full">{t.icon}</svg>
        </button>
      ))}
      <Select label="Unités" options={["200 unités", "500 unités"]} className="ml-[121px] w-[86px]" />
      <div className="relative ml-[162px] h-[22px] w-[77px]">
        <input aria-label="Période" defaultValue="21" className="h-full w-full rounded-[3px] border border-[#6e8894] bg-white pr-[18px] text-right" />
        <div className="absolute top-[3px] right-[2px] flex flex-col gap-px">
          <button aria-label="Plus" className="h-2 w-[14px] bg-[#a9c6d2]">
            <svg viewBox="0 0 14 8" className="h-full w-full"><path d="M4.500 5.500h5L7 2.500z" /></svg>
          </button>
          <button aria-label="Moins" className="h-2 w-[14px] bg-[#a9c6d2]">
            <svg viewBox="0 0 14 8" className="h-full w-full"><path d="M4.500 2.500h5L7 5.500z" /></svg>
          </button>
        </div>
      </div>
      <Select label="Type" options={["(x) ticks", "minutes"]} className="ml-px w-[88px]" />
      <div className="ml-[162px] flex h-[28px] rounded-[3px] border border-[#7d8f98] bg-linear-to-b from-white to-[#dde2e4]">
        <button aria-label="Ajouter un indicateur" className="w-[35px]">
          <svg viewBox="0 0 35 26" className="h-full w-full">
            <path d="M3 16q4 1 7-4t6-3q3 9 7 9t9-10v6q-5 5-9 4t-8-9q-4-2-7 2t-5 5z" fill="#b4e8b4" stroke="#108030" />
            <path d="M3 17q5-2 8-8l3-3 6 11q6 0 11-13" fill="none" stroke="#d04040" />
            <path d="M6 3h4v3h3v4h-3v3H6v-3H3V6h3z" fill="#fff" stroke="#888" />
            <path d="M13.500 13l3 3h-2v3h-2v-3h-2z" fill="#10a020" stroke="#10a020" />
            <path d="M24.500 11l3-3h-2V4h-2v4h-2z" fill="#f02020" stroke="#e02020" />
            <path d="M4 20h4v4H4zM14 20h4v4h-4zM28 19h4v5h-4z" fill="#18a818" />
            <path d="M9 22h4v2H9zM19 21h4v3h-4zM24 22h3v2h-3z" fill="#e03030" />
            <path d="M3 24.500h30" stroke="#2040d0" />
          </svg>
        </button>
        <button aria-label="Indicateurs" className="w-[13px] border-l border-[#7d8f98]">
          <svg viewBox="0 0 12 26" className="h-full w-full"><path d="M3 11h7l-3.500 4z" /></svg>
        </button>
      </div>
      <OrderPanel />
    </div>
  );
};

const Counter = ({ label }: { label: string }) => (
  <div className="flex items-center whitespace-nowrap">
    {label}
    <b className="ml-[4px]">0</b>
    <CancelIcon />
    <b className="mx-[6px]">/</b>
    <b>0</b>
    <Gears />
  </div>
);

const Summary = () => (
  <div className="grid h-[21px] grid-cols-[186fr_264fr_275fr_282fr_289fr_296fr] items-center bg-white">
    <div />
    <div>Portefeuille:<b className="ml-[4px]">n/d</b></div>
    <div>Gain latent :<b className="ml-[3px]">0,00€</b></div>
    <div>Gain Jour :<b className="ml-[4px] text-[#0a8a0a]">111,00€</b></div>
    <Counter label="Ordres:" />
    <Counter label="Position :" />
  </div>
);

// small toolbar that floats over the plot
const PriceTools = () => (
  <div className="absolute top-0 left-0 flex h-[19px] w-[98px] items-center gap-[3px] border border-[#6e8894] bg-linear-to-b from-[#b9dae7] to-[#a2c0cd] pl-[3px]">
    <span className="w-[20px]">Prix</span>
    <button aria-label="Réglages du prix">
      <svg viewBox="0 0 16 16" className="h-[15px] w-[15px]"><Wrench /></svg>
    </button>
    <button aria-label="Alertes">
      <svg viewBox="0 0 16 16" className="h-[15px] w-[15px]">
        <path d="M1.500 12.500q3-1 3-5q0-4 3.500-4t3.500 4q0 4 3 5zM6 14.500h4M8 1v2" fill="none" stroke="#111" />
        <path d="M2.500 3q-1 2 0 4M13.500 3q1 2 0 4" fill="none" stroke="#111" strokeDasharray="1 1" />
      </svg>
    </button>
    <button aria-label="Vendre">
      <svg viewBox="0 0 13 13" className="h-[13px] w-[13px]">
        <path d="M.5.500h9l3 3v9H.5z" fill="#fff" stroke="#8898a0" />
        <path d="M6.500 11l4-4H8V3H5v4H2.500z" fill="#f03030" />
      </svg>
    </button>
    <button aria-label="Acheter" className="ml-[2px]">
      <svg viewBox="0 0 13 13" className="h-[13px] w-[13px]">
        <path d="M.5.500h9l3 3v9H.5z" fill="#fff" stroke="#8898a0" />
        <path d="M6.500 3l4 4H8v4H5V7H2.500z" fill="#10b828" />
      </svg>
    </button>
  </div>
);

export default function App() {
  return (
    <div className="min-h-screen bg-white pt-[9px] pr-2 pb-2 pl-[10px] font-['Liberation_Sans',Arial,sans-serif] text-[11px] leading-[14px] text-black">
      <main className="border-r-[3px] border-l-2 border-[#9cbcc9] bg-white shadow-[0_0_8px_rgba(0,0,0,0.45)]">
        <TitleBar />
        <Toolbar />
        <Summary />
        <div className="relative">
          <Chart />
          <PriceTools />
        </div>
      </main>
    </div>
  );
}
